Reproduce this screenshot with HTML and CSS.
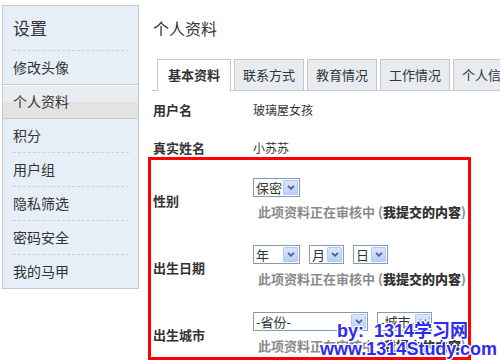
FILE: index.html
```html
<!DOCTYPE html>
<html lang="zh-CN">
<head>
  <meta charset="UTF-8" />
  <title>设置 - 个人资料</title>
  <link rel="stylesheet" href="styles.css">
</head>
<body>
  <div class="page">
    <!-- left menu -->
    <div class="side">
      <h2 class="side-title">设置</h2>
      <ul class="side-menu">
        <li><a href="#">修改头像</a></li>
        <li class="current"><a href="#">个人资料</a></li>
        <li class="after-current"><a href="#">积分</a></li>
        <li><a href="#">用户组</a></li>
        <li><a href="#">隐私筛选</a></li>
        <li><a href="#">密码安全</a></li>
        <li><a href="#">我的马甲</a></li>
      </ul>
    </div>

    <div class="main">
      <h1 class="main-title">个人资料</h1>
      <ul class="tabs">
        <li class="active">基本资料</li>
        <li>联系方式</li>
        <li>教育情况</li>
        <li>工作情况</li>
        <li>个人信息</li>
      </ul>

      <div class="row">
        <div class="label">用户名</div>
        <div class="value">玻璃屋女孩</div>
      </div>
      <div class="row row-short">
        <div class="label">真实姓名</div>
        <div class="value">小苏苏</div>
      </div>

      <div class="review-box">
        <div class="form-row">
          <div class="label">性别</div>
          <div class="field">
            <div class="selects">
              <span class="select w-sex"><span class="val">保密</span><span class="arrow"><svg width="8" height="5" viewBox="0 0 8 5"><path d="M1 0.8 L4 3.8 L7 0.8" stroke="#4d6185" stroke-width="1.8" fill="none"/></svg></span></span>
            </div>
            <p class="note">此项资料正在审核中 (<b>我提交的内容</b>)</p>
          </div>
        </div>

        <div class="form-row">
          <div class="label">出生日期</div>
          <div class="field">
            <div class="selects">
              <span class="select w-year"><span class="val">年</span><span class="arrow"><svg width="8" height="5" viewBox="0 0 8 5"><path d="M1 0.8 L4 3.8 L7 0.8" stroke="#4d6185" stroke-width="1.8" fill="none"/></svg></span></span>
              <span class="select w-day"><span class="val">月</span><span class="arrow"><svg width="8" height="5" viewBox="0 0 8 5"><path d="M1 0.8 L4 3.8 L7 0.8" stroke="#4d6185" stroke-width="1.8" fill="none"/></svg></span></span>
              <span class="select w-day"><span class="val">日</span><span class="arrow"><svg width="8" height="5" viewBox="0 0 8 5"><path d="M1 0.8 L4 3.8 L7 0.8" stroke="#4d6185" stroke-width="1.8" fill="none"/></svg></span></span>
            </div>
            <p class="note">此项资料正在审核中 (<b>我提交的内容</b>)</p>
          </div>
        </div>

        <div class="form-row last">
          <div class="label">出生城市</div>
          <div class="field">
            <div class="selects">
              <span class="select w-prov"><span class="val">-省份-</span><span class="arrow"><svg width="8" height="5" viewBox="0 0 8 5"><path d="M1 0.8 L4 3.8 L7 0.8" stroke="#4d6185" stroke-width="1.8" fill="none"/></svg></span></span>
              <span class="select w-city"><span class="val">-城市-</span><span class="arrow"><svg width="8" height="5" viewBox="0 0 8 5"><path d="M1 0.8 L4 3.8 L7 0.8" stroke="#4d6185" stroke-width="1.8" fill="none"/></svg></span></span>
            </div>
            <p class="note">此项资料正在审核中 (<b>我提交的内容</b>)</p>
          </div>
        </div>
      </div>
    </div>
  </div>

  <!-- watermark over the screenshot -->
  <div class="watermark">
    <div class="wm-line1">by:&nbsp; 1314学习网</div>
    <div class="wm-line2">www.1314Study.com</div>
  </div>
</body>
</html>
```

FILE: styles.css
```css
/* Basic reset */
* {
  margin: 0;
  padding: 0;
  box-sizing: border-box;
}

html, body {
  width: 500px;
  height: 360px;
  overflow: hidden;
}

body {
  font-family: "Noto Sans CJK SC", "Liberation Sans", sans-serif;
  background-color: #fff;
  color: #333;
  position: relative;
}

ul {
  list-style: none;
}

a {
  color: #333;
  text-decoration: none;
}

.page {
  display: flex;
  align-items: flex-start;
  padding: 5px 0 0 2px;
}

/* Sidebar */
.side {
  width: 137px;
  background-color: #e6eef7;
  border: 1px solid #c8c8c8;
  flex-shrink: 0;
}

.side-title {
  height: 44px;
  line-height: 44px;
  padding-left: 10px;
  font-size: 17px;
  font-weight: normal;
  color: #333;
}

.side-menu li {
  margin: 0 9px 0 10px;
  border-top: 1px dashed #c9cfd6;
}

.side-menu li a {
  display: block;
  height: 33px;
  line-height: 32px;
  font-size: 14px;
}

.side-menu li.current {
  margin: 0;
  padding-left: 10px;
  border-top: 1px solid #c8c8c8;
  border-bottom: 1px solid #c8c8c8;
  background: linear-gradient(#e9edf1 50%, #e3e3e3 50%);
  box-shadow: inset 0 1px #fff;
}

.side-menu li.after-current {
  border-top: none;
}

/* Main column */
.main {
  flex: 1;
  margin-left: 9px;
  padding-top: 13px;
}

.main-title {
  font-size: 16px;
  font-weight: normal;
  line-height: 20px;
  padding-left: 5px;
  color: #333;
}

.tabs {
  display: flex;
  margin: 21px 0 0 4px;
  padding-left: 5px;
  border-bottom: 1px solid #c8c8c8;
  height: 32px;
  white-space: nowrap;
}

.tabs li {
  width: 70px;
  flex-shrink: 0;
  height: 31px;
  line-height: 29px;
  margin-right: 3px;
  border: 1px solid #c8c8c8;
  border-bottom: none;
  background-color: #e8ecf0;
  text-align: center;
  font-size: 13px;
  color: #333;
}

.tabs li.active {
  width: 74px;
  height: 32px;
  background-color: #fff;
  font-weight: bold;
}

.row {
  display: flex;
  height: 38px;
  padding: 11px 0 0 5px;
  line-height: 16px;
}

.row-short {
  height: 28px;
}

.label {
  width: 100px;
  flex-shrink: 0;
  font-size: 13px;
  font-weight: bold;
  color: #333;
}

.value {
  font-size: 12px;
}

/* red highlight around fields under review */
.review-box {
  width: 323px;
  height: 203px;
  border: 3px solid #f00;
  overflow: hidden;
}

.form-row {
  display: flex;
  height: 67px;
  padding: 18px 0 0 2px;
}

.form-row.last {
  height: 63px;
}

.form-row .label {
  line-height: 16px;
  margin-top: 15px;
}

.selects {
  display: flex;
  gap: 9px;
}

.select {
  display: flex;
  justify-content: space-between;
  height: 19px;
  border: 1px solid #7f9db9;
  background-color: #fff;
  font-size: 13px;
  line-height: 17px;
}

.select .val {
  padding-left: 2px;
  white-space: nowrap;
  overflow: hidden;
}

.select .arrow {
  width: 15px;
  margin: 1px;
  border: 1px solid #b3c6f4;
  border-radius: 1px;
  background: linear-gradient(#dbe5fd, #bccffa);
  display: flex;
  align-items: center;
  justify-content: center;
  flex-shrink: 0;
}

.w-sex { width: 47px; }
.w-year { width: 47px; }
.w-day { width: 35px; }
.w-prov { width: 115px; }
.w-city { width: 55px; }

.note {
  margin-top: 7px;
  padding-left: 5px;
  font-size: 13px;
  line-height: 16px;
  font-weight: bold;
  color: #8a8a8a;
  white-space: nowrap;
}

.note b {
  color: #333;
}

/* watermark */
.watermark {
  position: absolute;
  left: 320px;
  top: 322px;
  font-family: "Liberation Sans", "Noto Sans CJK SC", sans-serif;
  font-size: 18px;
  line-height: 18px;
  font-weight: bold;
  color: #2b2bf2;
  white-space: nowrap;
  text-shadow: 1px 0 #fff, -1px 0 #fff, 0 1px #fff, 0 -1px #fff,
    1px 1px #fff, -1px -1px #fff, 1px -1px #fff, -1px 1px #fff;
}

.wm-line1 {
  padding-left: 17px;
}
```
